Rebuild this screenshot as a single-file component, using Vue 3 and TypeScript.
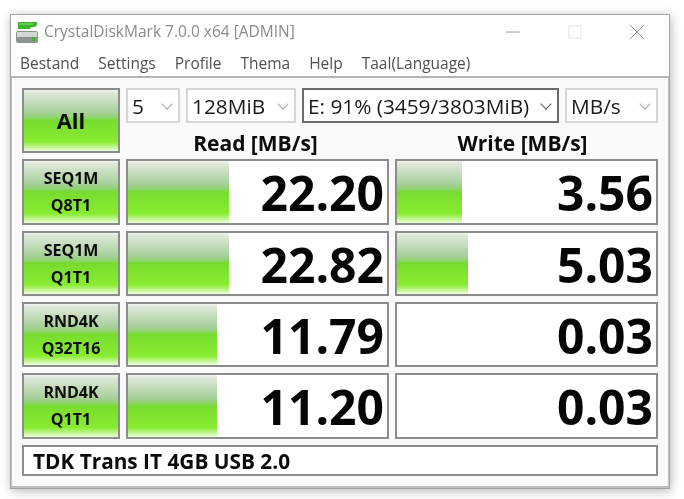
<script setup lang="ts">
interface Row {
  top: string
  bottom: string
  read: string
  readBar: number
  write: string
  writeBar: number
}

const menus = ['Bestand', 'Settings', 'Profile', 'Thema', 'Help', 'Taal(Language)']

const rows: Row[] = [
  { top: 'SEQ1M', bottom: 'Q8T1', read: '22.20', readBar: 101, write: '3.56', writeBar: 65 },
  { top: 'SEQ1M', bottom: 'Q1T1', read: '22.82', readBar: 101, write: '5.03', writeBar: 71 },
  { top: 'RND4K', bottom: 'Q32T16', read: '11.79', readBar: 89, write: '0.03', writeBar: 0 },
  { top: 'RND4K', bottom: 'Q1T1', read: '11.20', readBar: 89, write: '0.03', writeBar: 0 },
]
</script>

<template>
  <div class="page">
    <div class="window">
      <div class="titlebar">
        <svg class="app-icon" width="24" height="24" viewBox="0 0 24 24">
          <path d="M3 2h19v3l-2 2H16l-1 2H3z" fill="#3cb52a" />
          <path d="M4 4h14" stroke="#8fe070" stroke-width="1" />
          <rect x="1" y="11" width="22" height="12" rx="2" fill="#8d9490" />
          <rect x="2" y="12" width="20" height="5" fill="#d3d7d4" />
          <rect x="17" y="17" width="3" height="4" fill="#3cb52a" />
        </svg>
        <span class="title">CrystalDiskMark 7.0.0 x64 [ADMIN]</span>
        <div class="controls">
          <svg width="16" height="16" viewBox="0 0 16 16"><path d="M1 8h14" stroke="#9a9a9a" stroke-width="1" /></svg>
          <svg width="16" height="16" viewBox="0 0 16 16"><rect x="2" y="2" width="12" height="12" fill="none" stroke="#e4e4e4" stroke-width="1" /></svg>
          <svg width="16" height="16" viewBox="0 0 16 16"><path d="M1 1l14 14M15 1L1 15" stroke="#8c8c8c" stroke-width="1" /></svg>
        </div>
      </div>
      <nav class="menubar">
        <span v-for="m in menus" :key="m">{{ m }}</span>
      </nav>
      <div class="content">
        <div class="btn all"><span>All</span></div>
        <div class="top-right">
          <div class="combos">
            <div class="combo c-count"><span>5</span><i class="arrow"></i></div>
            <div class="combo c-size"><span>128MiB</span><i class="arrow"></i></div>
            <div class="combo c-drive active"><span>E: 91% (3459/3803MiB)</span><i class="arrow"></i></div>
            <div class="combo c-unit"><span>MB/s</span><i class="arrow"></i></div>
          </div>
          <div class="heads">
            <div>Read [MB/s]</div>
            <div>Write [MB/s]</div>
          </div>
        </div>
        <template v-for="r in rows" :key="r.top + r.bottom">
          <div class="btn label">
            <span>{{ r.top }}</span>
            <span>{{ r.bottom }}</span>
          </div>
          <div class="meter">
            <div class="bar" :style="{ width: r.readBar + 'px' }"></div>
            <span class="value">{{ r.read }}</span>
          </div>
          <div class="meter">
            <div class="bar" :style="{ width: r.writeBar + 'px' }"></div>
            <span class="value">{{ r.write }}</span>
          </div>
        </template>
        <div class="comment">TDK Trans IT 4GB USB 2.0</div>
      </div>
    </div>
  </div>
</template>

<style>
html,
body {
  margin: 0;
  background: #fff;
}
</style>

<style scoped>
.page {
  width: 684px;
  height: 499px;
  padding: 14px 0 0 10px;
  box-sizing: border-box;
  overflow: hidden;
  background: #fff;
  font-family: "Open Sans", "Noto Sans", sans-serif;
  filter: blur(0.35px);
}

.window {
  width: 660px;
  height: 475px;
  box-sizing: border-box;
  background: #fff;
  border: 1px solid #a2a2a2;
  box-shadow: 1px 2px 10px rgba(0, 0, 0, 0.28);
  display: flex;
  flex-direction: column;
}

.titlebar {
  height: 33px;
  display: flex;
  align-items: center;
  padding: 0 24px 0 4px;
  flex: none;
}

.app-icon {
  margin-right: 5px;
}

.title {
  font-size: 15.5px;
  color: #8b8b8b;
  margin-top: -2px;
}

.controls {
  margin-left: auto;
  display: flex;
  gap: 46px;
  align-items: center;
}

.menubar {
  height: 30px;
  flex: none;
  display: flex;
  gap: 19px;
  align-items: center;
  padding: 2px 0 0 9px;
  box-sizing: border-box;
  font-size: 15.5px;
  color: #505050;
  border-bottom: 2px solid #b4b4b4;
}

.content {
  flex: 1;
  background: #fafafa;
  padding: 10px 10px 0 10px;
  display: grid;
  grid-template-columns: 98px 263px 263px;
  grid-template-rows: 65px 66px 65px 65px 66px 31px;
  column-gap: 6px;
  row-gap: 6px;
  border-left: 1px solid #c4c4c4;
  border-right: 1px solid #c4c4c4;
  border-bottom: 2px solid #bdbdbd;
}

.btn {
  border: 2px solid #8c8c8c;
  box-sizing: border-box;
  background: linear-gradient(
    to bottom,
    #f2f5f0 0%,
    #dfe8db 4%,
    #a6cf98 38%,
    #8fd46e 45%,
    #78dc30 50%,
    #88ec30 85%,
    #eefcdc 100%
  );
  display: flex;
  flex-direction: column;
  align-items: center;
  justify-content: center;
  color: #0c0c0c;
  font-weight: 700;
}

.all {
  font-size: 22px;
  padding-bottom: 2px;
}

.label {
  font-size: 16px;
  line-height: 27px;
}

.top-right {
  grid-column: 2 / 4;
  display: flex;
  flex-direction: column;
}

.combos {
  display: flex;
  gap: 6px;
  height: 35px;
}

.combo {
  height: 35px;
  box-sizing: border-box;
  border: 2px solid #d6d6d6;
  background: #fff;
  display: flex;
  align-items: center;
  justify-content: space-between;
  padding: 0 4px;
  font-size: 20.8px;
  color: #1a1a1a;
  white-space: nowrap;
}

.combo.active {
  border-color: #6c6c6c;
}

.c-count {
  width: 54px;
}

.c-size {
  width: 110px;
}

.c-drive {
  width: 257px;
}

.c-unit {
  width: 93px;
}

.arrow {
  width: 7px;
  height: 7px;
  border-right: 1.3px solid #a8a8a8;
  border-bottom: 1.3px solid #a8a8a8;
  transform: translateY(-2px) rotate(45deg);
  margin-right: 3px;
  flex: none;
}

.active .arrow {
  border-color: #555;
}

.heads {
  flex: 1;
  display: grid;
  grid-template-columns: 259px 263px;
  column-gap: 6px;
  text-align: center;
  font-size: 21px;
  font-weight: 700;
  color: #0c0c0c;
  line-height: 20px;
  padding-top: 10px;
}

.meter {
  position: relative;
  border: 2px solid #8c8c8c;
  box-sizing: border-box;
  background: #fff;
  display: flex;
  align-items: center;
  justify-content: flex-end;
  padding: 2px 3px 0 0;
}

.bar {
  position: absolute;
  left: 0;
  top: 0;
  bottom: 0;
  background: linear-gradient(
    to bottom,
    #f2f5f0 0%,
    #dfe8db 4%,
    #a6cf98 38%,
    #8fd46e 45%,
    #78dc30 50%,
    #88ec30 85%,
    #eefcdc 100%
  );
}

.value {
  position: relative;
  font-size: 48px;
  font-weight: 700;
  color: #050505;
  line-height: 1;
}

.comment {
  grid-column: 1 / 4;
  border: 2px solid #8c8c8c;
  box-sizing: border-box;
  background: #fff;
  display: flex;
  align-items: center;
  padding-left: 9px;
  font-size: 20.8px;
  font-weight: 700;
  color: #0c0c0c;
}
</style>
